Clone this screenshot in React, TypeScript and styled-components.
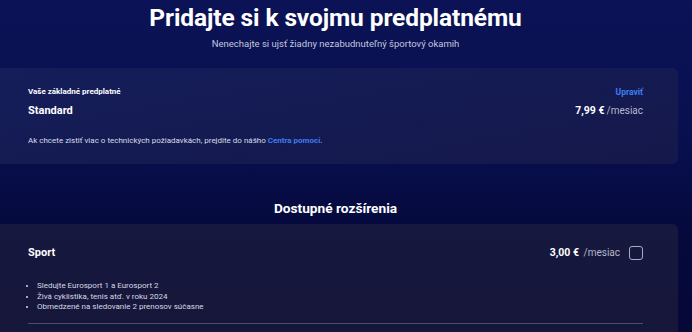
import styled, { createGlobalStyle } from 'styled-components';

const GlobalStyle = createGlobalStyle`
  html, body {
    margin: 0;
    padding: 0;
    background: #050a45;
  }
  body {
    font-family: Roboto, "Liberation Sans", sans-serif;
    color: #ffffff;
    overflow: hidden;
  }
`;

const Page = styled.div`
  width: 692px;
  height: 332px;
  overflow: hidden;
  background: linear-gradient(180deg, #0b1356 0%, #081050 40%, #05093c 70%, #060838 100%);
`;

const Column = styled.main`
  display: flex;
  flex-direction: column;
  margin: 0 14px 0 -7px;
  padding-top: 4px;
`;

const Title = styled.h1`
  margin: 0;
  font-size: 24.5px;
  line-height: 28px;
  font-weight: 700;
  text-align: center;
  letter-spacing: -0.1px;
`;

const Subtitle = styled.p`
  margin: 6px 0 0;
  font-size: 9.5px;
  line-height: 12px;
  color: #c3c7dc;
  text-align: center;
`;

const Card = styled.section<{ $tone: 'base' | 'addon' }>`
  border-radius: 6px;
  padding: ${(p) => (p.$tone === 'base' ? '19px 35px 18px' : '22px 35px 0')};
  background: ${(p) =>
    p.$tone === 'base'
      ? 'linear-gradient(170deg, #151d5a 0%, #141b52 50%, #16184a 100%)'
      : 'linear-gradient(180deg, #17183f 0%, #161639 100%)'};
  height: ${(p) => (p.$tone === 'base' ? 'auto' : '120px')};
  box-sizing: border-box;
`;

const Row = styled.div<{ $gap?: number }>`
  display: flex;
  justify-content: space-between;
  align-items: center;
  margin-top: ${(p) => p.$gap ?? 0}px;
`;

const Label = styled.span`
  font-size: 8px;
  line-height: 10px;
  font-weight: 700;
`;

const EditLink = styled.a`
  font-size: 8.5px;
  line-height: 10px;
  font-weight: 700;
  color: #3d7ef0;
  text-decoration: none;
`;

const PlanName = styled.span`
  font-size: 11px;
  line-height: 14px;
  font-weight: 700;
`;

const Price = styled.span`
  font-size: 10.5px;
  line-height: 14px;
  font-weight: 700;
  color: #ffffff;
`;

const Period = styled.span`
  font-size: 10px;
  font-weight: 400;
  color: #b5b8cc;
  margin-left: 2px;
`;

const HelpText = styled.p`
  margin: 18px 0 0;
  font-size: 8px;
  line-height: 10px;
  color: #d9dbe8;
`;

const HelpLink = styled.a`
  color: #3d7ef0;
  font-weight: 700;
  text-decoration: none;
`;

const SectionTitle = styled.h2`
  margin: 36px 0 8px;
  font-size: 13.7px;
  line-height: 16px;
  font-weight: 700;
  text-align: center;
`;

const PriceBox = styled.div`
  display: flex;
  align-items: center;
  gap: 9px;
`;

const Checkbox = styled.span`
  width: 12px;
  height: 12px;
  border: 1px solid #a9abc0;
  border-radius: 3px;
`;

const Features = styled.ul`
  margin: 21px 0 0;
  padding: 0 0 0 9px;
  font-size: 8px;
  line-height: 10.5px;
  color: #d6d8e6;

  li::marker {
    font-size: 7px;
  }
`;

const Divider = styled.hr`
  margin: 10px 0 0;
  border: none;
  height: 1.5px;
  background: #4b4d6c;
`;

export default function App() {
  return (
    <Page>
      <GlobalStyle />
      <Column>
        <Title>Pridajte si k svojmu predplatnému</Title>
        <Subtitle>Nenechajte si ujsť žiadny nezabudnuteľný športový okamih</Subtitle>

        <Card $tone="base" style={{ marginTop: 18 }}>
          <Row>
            <Label>Vaše základné predplatné</Label>
            <EditLink href="#">Upraviť</EditLink>
          </Row>
          <Row $gap={7}>
            <PlanName>Standard</PlanName>
            <Price>
              7,99 €<Period>/mesiac</Period>
            </Price>
          </Row>
          <HelpText>
            Ak chcete zistiť viac o technických požiadavkách, prejdite do nášho{' '}
            <HelpLink href="#">Centra pomoci</HelpLink>.
          </HelpText>
        </Card>

        <SectionTitle>Dostupné rozšírenia</SectionTitle>

        <Card $tone="addon">
          <Row>
            <PlanName>Sport</PlanName>
            <PriceBox>
              <Price>
                3,00 € <Period>/mesiac</Period>
              </Price>
              <Checkbox />
            </PriceBox>
          </Row>
          <Features>
            <li>Sledujte Eurosport 1 a Eurosport 2</li>
            <li>Živá cyklistika, tenis atď. v roku 2024</li>
            <li>Obmedzené na sledovanie 2 prenosov súčasne</li>
          </Features>
          <Divider />
        </Card>
      </Column>
    </Page>
  );
}
